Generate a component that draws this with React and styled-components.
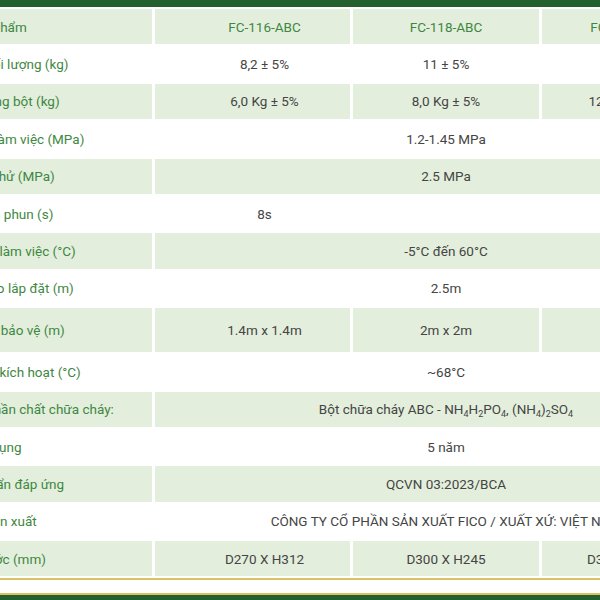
import React from "react";
import styled, { createGlobalStyle } from "styled-components";

const GlobalStyle = createGlobalStyle`
  html, body {
    margin: 0;
    padding: 0;
    background: #fff;
  }
  body {
    font-family: Roboto, "Noto Sans", sans-serif;
  }
`;

const Frame = styled.div`
  width: 600px;
  height: 600px;
  overflow: hidden;
  display: flex;
  flex-direction: column;
  background: #fff;
`;

const TopBar = styled.div`
  flex: none;
  height: 7px;
  background: #22602d;
`;

const TableClip = styled.div`
  flex: none;
  overflow: hidden;
`;

const SpecTable = styled.table`
  margin-left: -73px;
  border-collapse: separate;
  border-spacing: 3px 2px;
  table-layout: fixed;
  width: 813px;
  font-size: 13.5px;
  line-height: 18px;
  color: #454545;
`;

const Row = styled.tr`
  height: ${(p) => (p.$tall ? 44 : 35.4)}px;
  background: ${(p) => (p.$shaded ? "#e3efdc" : "transparent")};
  color: ${(p) => (p.$head ? "#3f8743" : "inherit")};
`;

const Label = styled.th`
  padding: 0 0 0 15px;
  text-align: left;
  font-weight: 400;
  color: #3f8743;
  white-space: nowrap;
  overflow: hidden;
`;

const Value = styled.td`
  padding: 0 ${(p) => (p.$col === 3 ? 26 : 0)}px 0 ${(p) => (p.$col === 1 ? 24 : 0)}px;
  text-align: center;
  white-space: nowrap;
`;

const Sub = styled.sub`
  font-size: 9px;
  line-height: 0;
  vertical-align: -3px;
`;

const Footer = styled.div`
  flex: none;
  height: 13px;
  border-top: 2px solid #d8c262;
  border-bottom: 2px solid #d8c262;
`;

const BottomBar = styled.div`
  flex: 1;
  background: #22602d;
`;

const compound = (
  <>
    Bột chữa cháy ABC - NH<Sub>4</Sub>H<Sub>2</Sub>PO<Sub>4</Sub>, (NH<Sub>4</Sub>)
    <Sub>2</Sub>SO<Sub>4</Sub>
  </>
);

const rows = [
  { label: "Mã sản phẩm", head: true, vals: ["FC-116-ABC", "FC-118-ABC", "FC-120-ABC"] },
  { label: "Tổng khối lượng (kg)", vals: ["8,2 ± 5%", "11 ± 5%", "14 ± 5%"] },
  { label: "Khối lượng bột (kg)", vals: ["6,0 Kg ± 5%", "8,0 Kg ± 5%", "12,0 Kg ± 5%"] },
  { label: "Áp suất làm việc (MPa)", span: "1.2-1.45 MPa" },
  { label: "Áp suất thử (MPa)", span: "2.5 MPa" },
  { label: "Thời gian phun (s)", vals: ["8s", "", ""] },
  { label: "Nhiệt độ làm việc (°C)", span: "-5°C đến 60°C" },
  { label: "Chiều cao lắp đặt (m)", span: "2.5m" },
  { label: "Diện tích bảo vệ (m)", tall: true, vals: ["1.4m x 1.4m", "2m x 2m", "3m x 3m"] },
  { label: "Nhiệt độ kích hoạt (°C)", span: "~68°C" },
  { label: "Thành phần chất chữa cháy:", span: compound },
  { label: "Hạn sử dụng", span: "5 năm" },
  { label: "Tiêu chuẩn đáp ứng", span: "QCVN 03:2023/BCA" },
  { label: "Đơn vị sản xuất", span: "CÔNG TY CỔ PHẦN SẢN XUẤT FICO / XUẤT XỨ: VIỆT NAM" },
  { label: "Kích thước (mm)", vals: ["D270 X H312", "D300 X H245", "D300 X H370"] },
];

export default function App() {
  return (
    <>
      <GlobalStyle />
      <Frame>
        <TopBar />
        <TableClip>
          <SpecTable>
            <colgroup>
              <col style={{ width: 222 }} />
              <col style={{ width: 195 }} />
              <col style={{ width: 186 }} />
              <col style={{ width: 195 }} />
            </colgroup>
            <tbody>
              {rows.map((r, i) => (
                <Row key={i} $shaded={i % 2 === 0} $head={r.head} $tall={r.tall}>
                  <Label>{r.label}</Label>
                  {r.span ? (
                    <Value colSpan={3}>{r.span}</Value>
                  ) : (
                    r.vals.map((v, j) => (
                      <Value key={j} $col={j + 1}>
                        {v}
                      </Value>
                    ))
                  )}
                </Row>
              ))}
            </tbody>
          </SpecTable>
        </TableClip>
        <Footer />
        <BottomBar />
      </Frame>
    </>
  );
}
